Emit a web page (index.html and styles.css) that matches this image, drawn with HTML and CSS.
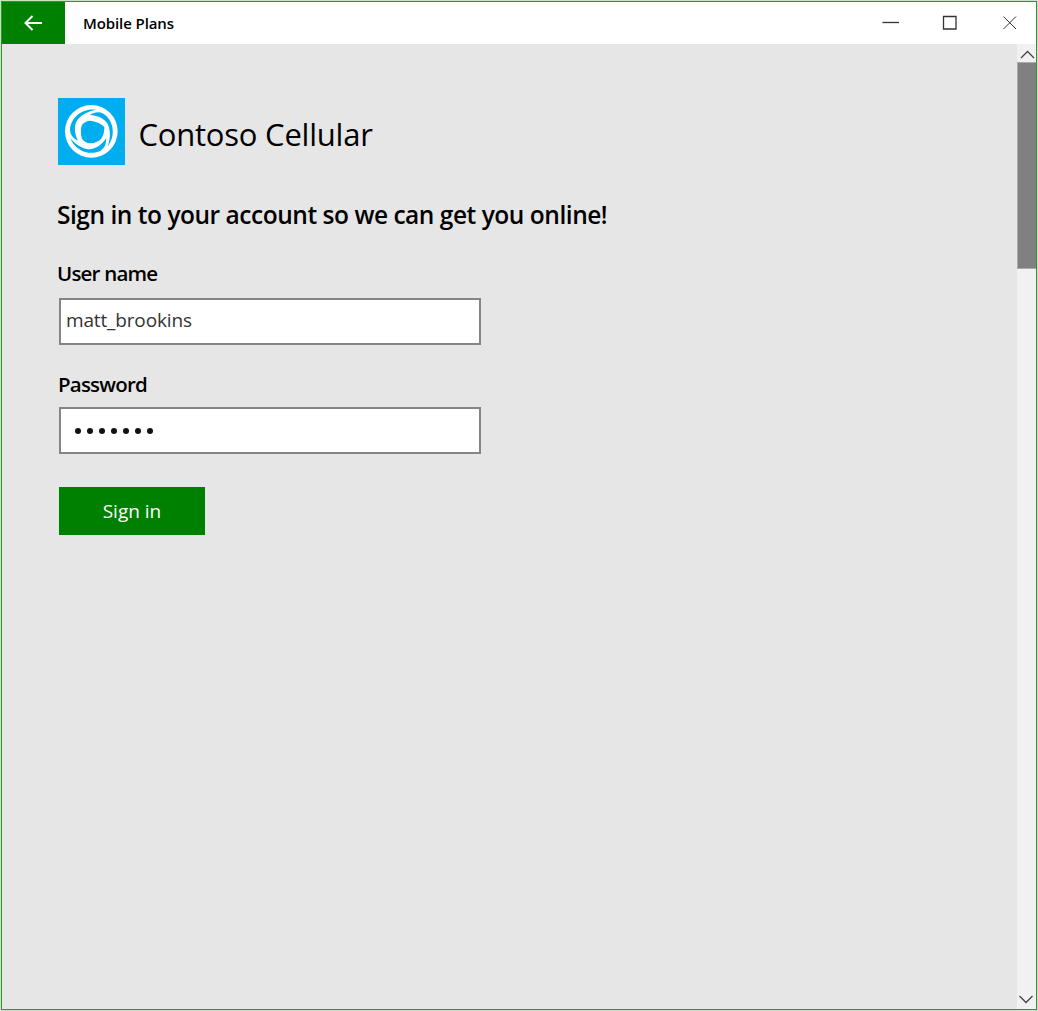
FILE: index.html
```
<!DOCTYPE html>
<html lang="en">
<head>
<meta charset="utf-8">
<title>Mobile Plans</title>
<link rel="stylesheet" href="styles.css">
</head>
<body>
<div class="window">
  <header class="titlebar">
    <button class="back" aria-label="Back">
      <svg width="20" height="18" viewBox="0 0 20 18"><path d="M18 9H1.500M8.500 2L1.500 9l7 7"/></svg>
    </button>
    <span class="title">Mobile Plans</span>
    <div class="controls">
      <svg width="60" height="42" viewBox="0 0 60 42"><path d="M22.500 20.500h16.500"/></svg>
      <svg width="60" height="42" viewBox="0 0 60 42"><path d="M23.500 14.500h12.500v12.500h-12.500z"/></svg>
      <svg class="close" width="56" height="42" viewBox="0 0 56 42"><path d="M23.500 14.500l12.500 12.500M36 14.500L23.500 27"/></svg>
    </div>
  </header>
  <div class="body">
    <main class="content">
      <div class="brand">
        <svg class="logo" viewBox="25 23 201 201">
          <rect x="25" y="23" width="201" height="201" fill="#00adef"/>
          <circle cx="125" cy="123" r="79" fill="#fff"/>
          <path d="M97 103Q108 91 123 91Q150 95 164 110Q165 130 154 146Q142 158 122 159Q105 157 97 145Q90 122 97 103Z" fill="#00adef"/>
          <g fill="#00adef">
            <path id="blade" d="M139 58C98 52 63 82 61 118C62 133 70 144 85 151C74 130 71 102 86 85C99 71 118 62 139 58Z"/>
            <use href="#blade" transform="rotate(120 125 123)"/>
            <use href="#blade" transform="rotate(240 125 123)"/>
          </g>
        </svg>
        <h1>Contoso Cellular</h1>
      </div>
      <h2>Sign in to your account so we can get you online!</h2>
      <form class="form">
        <label class="user-label">User name</label>
        <div class="field user-field"><span>matt_brookins</span></div>
        <label class="pass-label">Password</label>
        <div class="field dots"><i></i><i></i><i></i><i></i><i></i><i></i><i></i></div>
        <button class="submit" type="button"><span>Sign in</span></button>
      </form>
    </main>
    <div class="scrollbar">
      <svg width="19" height="18" viewBox="0 0 19 18"><path d="M4 14l6.500-6.500L17 14"/></svg>
      <div class="thumb"></div>
      <svg class="down" width="19" height="20" viewBox="0 0 19 20"><path d="M2.500 7l6.500 6.500l6.500-6.500"/></svg>
    </div>
  </div>
</div>
</body>
</html>
```
FILE: styles.css
```
* { box-sizing: border-box; }
body {
  margin: 0;
  padding: 1px;
  height: 1011px;
  background: #fff;
  color: #000;
  font-family: "Open Sans", "Noto Sans", sans-serif;
  overflow: hidden;
}
.window {
  width: 1036px;
  height: 1009px;
  border: 1px solid #2d962d;
  box-shadow: 0 0 0 1px #c5e6c5;
  display: flex;
  flex-direction: column;
}
.titlebar { height: 42px; flex: none; display: flex; background: #fff; }
.back {
  width: 63px;
  padding: 0;
  border: 0;
  background: #008000;
  display: flex;
  align-items: center;
  justify-content: center;
}
.back svg { fill: none; stroke: #fff; stroke-width: 2; }
.title {
  margin-left: 18px;
  font-size: 15px;
  font-weight: 600;
  line-height: 42px;
  letter-spacing: -0.1px;
}
.controls { display: flex; margin-left: auto; }
.controls svg { fill: none; stroke: #333; stroke-width: 1.3; }
.controls .close { stroke-width: 1; }
.body { flex: 1; display: flex; min-height: 0; }
.content { flex: 1; padding: 54px 0 0 55px; background: #e6e6e6; }
.brand { display: flex; height: 67px; padding-left: 1px; }
.logo { width: 67px; height: 67px; }
h1 {
  margin: 0 0 0 13.5px;
  font-size: 31px;
  font-weight: 400;
  line-height: 72px;
  letter-spacing: -0.22px;
  white-space: nowrap;
}
h2 {
  margin: 31px 0 0;
  font-size: 24.5px;
  font-weight: 600;
  line-height: 37px;
  letter-spacing: -0.47px;
  white-space: nowrap;
}
.form { display: flex; flex-direction: column; align-items: flex-start; }
label { font-size: 20.5px; font-weight: 600; line-height: 28px; letter-spacing: -0.8px; }
.user-label { margin-top: 26px; }
.pass-label { margin: 25px 0 0 1px; }
.field {
  width: 422px;
  height: 47px;
  margin: 11px 0 0 2px;
  border: 2px solid #858585;
  background: #fff;
  display: flex;
  align-items: center;
  padding: 0 0 0 5px;
}
.user-field { font-size: 19px; color: #333; font-weight: 500; letter-spacing: -0.15px; padding-bottom: 3px; }
.dots { gap: 6px; padding-left: 14px; margin-top: 9px; }
.dots i { width: 6px; height: 6px; border-radius: 50%; background: #111; }
.submit {
  width: 146px;
  height: 48px;
  margin: 33px 0 0 2px;
  padding: 0;
  border: 0;
  background: #008000;
  color: #fff;
  font: 400 19px/46px "Open Sans", sans-serif;
}
.scrollbar { width: 19px; background: #f1f1f1; display: flex; flex-direction: column; }
.scrollbar svg { flex: none; fill: none; stroke: #444; stroke-width: 1.3; }
.thumb { height: 207px; background: #808080; border: 1px solid #aaa; border-right: 0; }
.down { margin-top: auto; }
```
